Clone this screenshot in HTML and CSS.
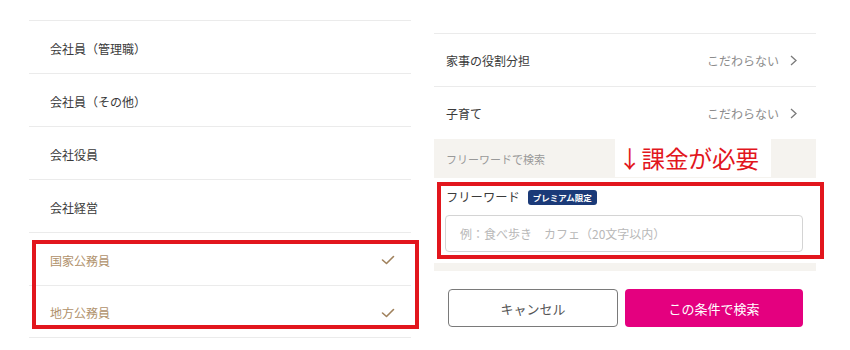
FILE: index.html
```html
<!DOCTYPE html>
<html lang="ja">
<head>
    <meta charset="UTF-8">
    <meta name="viewport" content="width=device-width, initial-scale=1.0">
    <title>検索条件</title>
    <link rel="stylesheet" href="styles.css">
</head>
<body>
    <div class="panel panel-left">
        <div class="row">会社員（管理職）</div>
        <div class="row">会社員（その他）</div>
        <div class="row">会社役員</div>
        <div class="row">会社経営</div>
        <div class="row selected">国家公務員
            <svg class="check" width="14" height="10" viewBox="0 0 14 10"><polyline points="1.5,5 5.5,8.5 12.5,1.5" fill="none" stroke="#a0815c" stroke-width="1.6" stroke-linecap="round" stroke-linejoin="round"/></svg>
        </div>
        <div class="row selected last">地方公務員
            <svg class="check" width="14" height="10" viewBox="0 0 14 10"><polyline points="1.5,5 5.5,8.5 12.5,1.5" fill="none" stroke="#a0815c" stroke-width="1.6" stroke-linecap="round" stroke-linejoin="round"/></svg>
        </div>
    </div>

    <div class="panel panel-right">
        <div class="row">家事の役割分担
            <span class="value">こだわらない
                <svg class="chev" width="7" height="11" viewBox="0 0 7 11"><polyline points="1,1 6,5.5 1,10" fill="none" stroke="#7a7a7a" stroke-width="1.3"/></svg>
            </span>
        </div>
        <div class="row">子育て
            <span class="value">こだわらない
                <svg class="chev" width="7" height="11" viewBox="0 0 7 11"><polyline points="1,1 6,5.5 1,10" fill="none" stroke="#7a7a7a" stroke-width="1.3"/></svg>
            </span>
        </div>
        <div class="section-head">フリーワードで検索</div>
        <div class="freeword">
            <div class="fw-label">フリーワード <span class="badge">プレミアム限定</span></div>
            <div class="fw-input">例：食べ歩き　カフェ（20文字以内）</div>
        </div>
        <div class="section-gap"></div>
        <div class="actions">
            <button class="btn btn-cancel">キャンセル</button>
            <button class="btn btn-search">この条件で検索</button>
        </div>
    </div>

    <!-- annotations -->
    <div class="note">↓課金が必要</div>
    <div class="mark mark-left"></div>
    <div class="mark mark-right"></div>
</body>
</html>
```

FILE: styles.css
```css
:root {
    --line: #ebebeb;
    --text: #3a3a3a;
    --muted: #8c8c8c;
    --gold: #b0916b;
    --beige: #f5f3ef;
    --pink: #e4007f;
    --navy: #1b3a78;
    --red: #e2161d;
}

body {
    margin: 0;
    width: 850px;
    height: 350px;
    overflow: hidden;
    position: relative;
    display: flex;
    align-items: flex-start;
    background: #fff;
    font-family: "Noto Sans CJK JP", "Noto Sans", sans-serif;
    color: var(--text);
}

.panel {
    width: 382px;
    flex: none;
}

.panel-left {
    margin-left: 29px;
    padding-top: 20px;
}

.panel-right {
    margin-left: 23px;
    padding-top: 33px;
}

.row {
    height: 53px;
    box-sizing: border-box;
    border-top: 1px solid var(--line);
    display: flex;
    align-items: center;
    justify-content: space-between;
    font-size: 12px;
}

.panel-left .row {
    padding: 2px 16px 0 21px;
}

.row.last {
    border-bottom: 1px solid var(--line);
}

.row.selected {
    color: var(--gold);
}

.panel-right .row {
    padding: 0 19px 0 12px;
}

.value {
    color: var(--muted);
    display: flex;
    align-items: center;
    gap: 11px;
}

.section-head {
    height: 39px;
    background: var(--beige);
    display: flex;
    align-items: center;
    padding-left: 12px;
    font-size: 11px;
    color: #999;
}

.freeword {
    padding: 11px 13px 11px 11px;
}

.fw-label {
    height: 16px;
    display: flex;
    align-items: center;
    gap: 4px;
    font-size: 12.3px;
    padding-left: 1px;
}

.badge {
    background: var(--navy);
    color: #fff;
    font-size: 8.5px;
    font-weight: bold;
    height: 15px;
    line-height: 15px;
    padding: 0 5px;
    border-radius: 3px;
    margin-left: 4px;
}

.fw-input {
    margin-top: 10px;
    height: 37px;
    box-sizing: border-box;
    border: 1px solid #d4d4d4;
    border-radius: 4px;
    padding-left: 14px;
    display: flex;
    align-items: center;
    font-size: 12px;
    color: #b8b8b8;
}

.section-gap {
    height: 8px;
    background: var(--beige);
}

.actions {
    display: flex;
    gap: 7px;
    padding: 18px 13px 0 14px;
}

.btn {
    height: 38px;
    border-radius: 4px;
    font-family: inherit;
    font-size: 13px;
    cursor: pointer;
}

.btn-cancel {
    width: 170px;
    background: #fff;
    border: 1px solid #7a7a7a;
    color: #555;
}

.btn-search {
    flex: 1;
    background: var(--pink);
    border: none;
    color: #fff;
}

/* annotation overlays */
.note {
    position: absolute;
    left: 615px;
    top: 139px;
    width: 156px;
    height: 38px;
    background: #fff;
    color: var(--red);
    font-size: 23.5px;
    line-height: 38px;
    padding-left: 3px;
    box-sizing: border-box;
}

.mark {
    position: absolute;
    border: 4px solid var(--red);
    box-sizing: border-box;
}

.mark-left {
    left: 32px;
    top: 240px;
    width: 387px;
    height: 89px;
}

.mark-right {
    left: 437px;
    top: 182px;
    width: 387px;
    height: 77px;
}
```
